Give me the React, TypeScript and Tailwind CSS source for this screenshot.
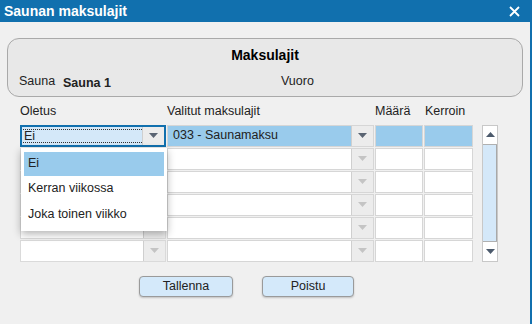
import React from 'react';

const Arrow: React.FC<{ disabled?: boolean }> = ({ disabled }) => (
  <div className="w-[22px] h-full flex items-center justify-center bg-[#ececec] border-l border-[#cfcfcf]">
    <svg width="9" height="5" viewBox="0 0 9 5">
      <path d="M0 0 L9 0 L4.5 5 Z" fill={disabled ? '#c4c4c4' : '#5a6472'} />
    </svg>
  </div>
);

const rows = [0, 1, 2, 3, 4, 5];

const App: React.FC = () => {
  return (
    <div className="w-[532px] h-[324px] bg-[#f0f0f0] border-r-2 border-[#1170ae] text-[12.5px] text-[#222] overflow-hidden" style={{ fontFamily: '"Liberation Sans", Arial, sans-serif' }}>
      <div className="h-[22px] bg-[#1170ae] flex items-center justify-between pl-[4px] pr-[10px]">
        <span className="text-white font-bold text-[14px]">Saunan maksulajit</span>
        <svg width="11" height="11" viewBox="0 0 11 11">
          <path d="M1 1 L10 10 M10 1 L1 10" stroke="white" strokeWidth="1.8" />
        </svg>
      </div>

      <div className="mx-[7px] mt-[16px] h-[59px] rounded-[12px] border border-[#a9a9a9] bg-[#e8e8e8] px-[11px] pt-[6px]">
        <div className="text-center font-bold text-[14px] text-black">Maksulajit</div>
        <div className="flex items-end mt-[6px]">
          <span className="w-[44px]">Sauna</span>
          <span className="font-bold translate-y-[2px] w-[218px]">Sauna 1</span>
          <span>Vuoro</span>
        </div>
      </div>

      <div className="ml-[20px] mt-[5px] flex">
        <div className="w-[147px]">Oletus</div>
        <div className="w-[208px]">Valitut maksulajit</div>
        <div className="w-[50px]">Määrä</div>
        <div>Kerroin</div>
      </div>

      <div className="relative ml-[20px] mt-[4px] flex gap-[9px]">
        <div className="flex flex-col gap-[1px]">
          {rows.map((r) => (
            <div key={r} className="flex gap-[1px] h-[22px]">
              {r === 0 ? (
                <div className="w-[146px] flex border-2 border-[#1170ae] bg-[#d4e8f9]">
                  <div className="flex-1 my-[2px] ml-[1px] border-y border-dotted border-[#333] flex items-center pl-[1px] leading-none">Ei</div>
                  <Arrow />
                </div>
              ) : (
                <div className="w-[146px] flex border border-[#dadada] bg-white">
                  <div className="flex-1" />
                  <Arrow disabled />
                </div>
              )}
              <div className={`w-[207px] flex border border-[#d6d6d6] ${r === 0 ? 'bg-[#99cbec]' : 'bg-white'}`}>
                <div className="flex-1 flex items-center pl-[5px]">{r === 0 ? '033 - Saunamaksu' : ''}</div>
                <Arrow disabled={r !== 0} />
              </div>
              <div className={`w-[48px] border border-[#d6d6d6] ${r === 0 ? 'bg-[#99cbec]' : 'bg-white'}`} />
              <div className={`w-[49px] border border-[#d6d6d6] ${r === 0 ? 'bg-[#99cbec]' : 'bg-white'}`} />
            </div>
          ))}
        </div>

        <div className="w-[16px] flex flex-col border border-[#c8c8c8]">
          <div className="h-[19px] bg-white flex items-center justify-center border-b border-[#b0b0b0]">
            <svg width="9" height="5" viewBox="0 0 9 5"><path d="M0 5 L9 5 L4.5 0 Z" fill="#4c5a6c" /></svg>
          </div>
          <div className="flex-1 bg-[#d4e8f9] border-r border-[#a8a8a8]" />
          <div className="h-[20px] bg-white flex items-center justify-center border-t border-[#b0b0b0]">
            <svg width="9" height="5" viewBox="0 0 9 5"><path d="M0 0 L9 0 L4.5 5 Z" fill="#4c5a6c" /></svg>
          </div>
        </div>

        <div className="absolute left-[1px] top-[23px] w-[146px] bg-white shadow-[0_3px_8px_rgba(0,0,0,0.3)] pt-[4px] pb-[3px] px-[3px]">
          <div className="h-[24px] bg-[#99cbec] flex items-center pl-[4px]">Ei</div>
          <div className="h-[26px] flex items-center pl-[4px]">Kerran viikossa</div>
          <div className="h-[26px] flex items-center pl-[4px]">Joka toinen viikko</div>
        </div>
      </div>

      <div className="mt-[14px] flex pl-[139px] gap-[29px]">
        <button className="w-[94px] h-[21px] rounded-[4px] border border-[#9a9a9a] bg-[#d4e9fa] shadow-[0_1px_2px_rgba(0,0,0,0.2)]">Tallenna</button>
        <button className="w-[92px] h-[21px] rounded-[4px] border border-[#9a9a9a] bg-[#d4e9fa] shadow-[0_1px_2px_rgba(0,0,0,0.2)]">Poistu</button>
      </div>
    </div>
  );
};

export default App;
